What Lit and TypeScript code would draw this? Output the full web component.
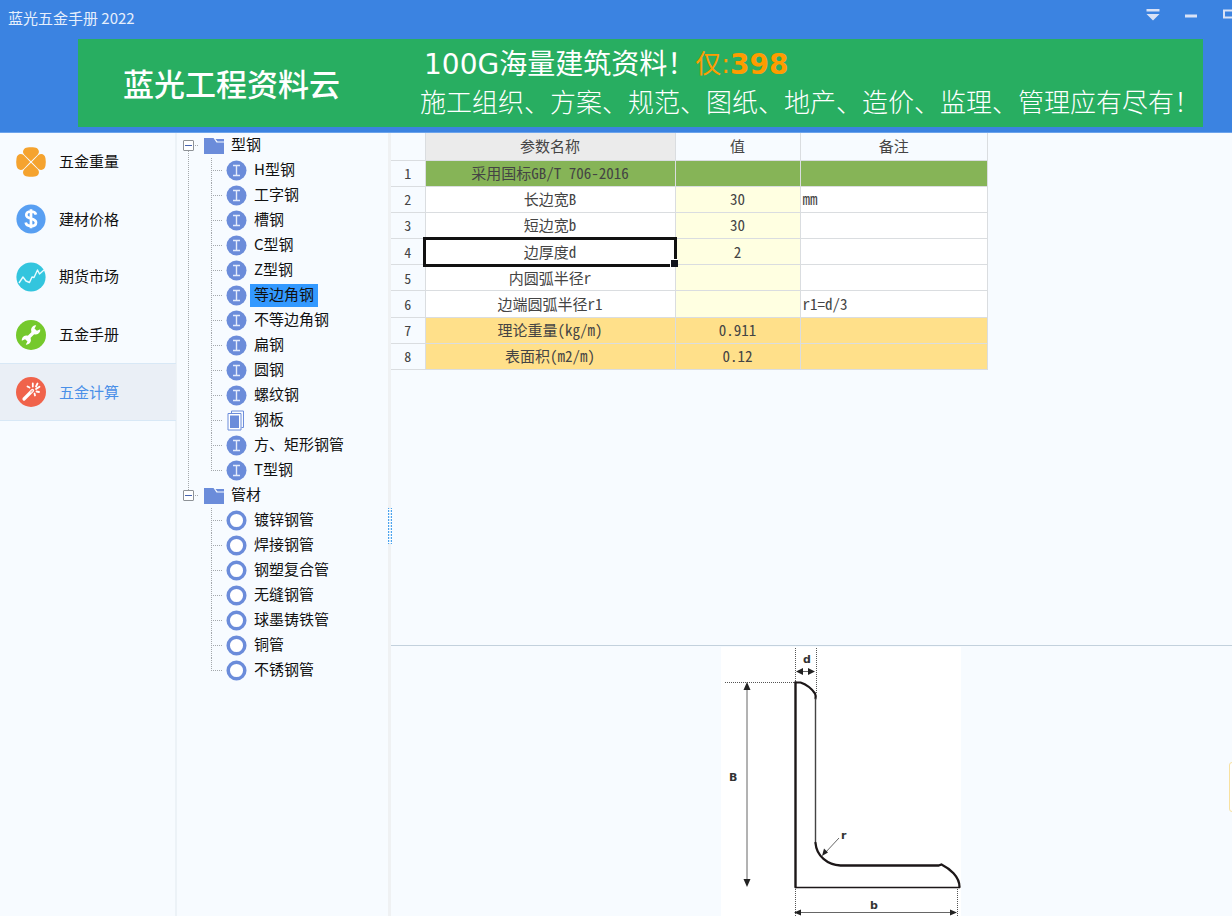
import { LitElement, html, css, svg, nothing } from "lit";
import { customElement, state } from "lit/decorators.js";
import { classMap } from "lit/directives/class-map.js";

type Kind = "beam" | "plate" | "pipe";

interface Group {
  name: string;
  items: { name: string; kind: Kind }[];
}

const beam = (name: string) => ({ name, kind: "beam" as Kind });
const pipe = (name: string) => ({ name, kind: "pipe" as Kind });

const GROUPS: Group[] = [
  {
    name: "型钢",
    items: [
      beam("H型钢"),
      beam("工字钢"),
      beam("槽钢"),
      beam("C型钢"),
      beam("Z型钢"),
      beam("等边角钢"),
      beam("不等边角钢"),
      beam("扁钢"),
      beam("圆钢"),
      beam("螺纹钢"),
      { name: "钢板", kind: "plate" },
      beam("方、矩形钢管"),
      beam("T型钢"),
    ],
  },
  {
    name: "管材",
    items: ["镀锌钢管", "焊接钢管", "钢塑复合管", "无缝钢管", "球墨铸铁管", "铜管", "不锈钢管"].map(pipe),
  },
];

const ROWS = [
  { name: "采用国标GB/T 706-2016", value: "", note: "", tone: "standard" },
  { name: "长边宽B", value: "30", note: "mm", tone: "input" },
  { name: "短边宽b", value: "30", note: "", tone: "input" },
  { name: "边厚度d", value: "2", note: "", tone: "input" },
  { name: "内圆弧半径r", value: "", note: "", tone: "input" },
  { name: "边端圆弧半径r1", value: "", note: "r1=d/3", tone: "input" },
  { name: "理论重量(kg/m)", value: "0.911", note: "", tone: "result" },
  { name: "表面积(m2/m)", value: "0.12", note: "", tone: "result" },
];

const petal = "M15 14.2 8.3 7.8C5.6 4.7 7.6.9 11.4.5c2.4-.4 4.8-.4 7.2 0 3.8.4 5.8 4.2 3.1 7.3Z";

const MENU = [
  {
    name: "五金重量",
    icon: svg`<g fill="#f5a32f">${[0, 90, 180, 270].map(
      (a) => svg`<path d=${petal} transform="rotate(${a} 15 15)"/>`
    )}</g>`,
  },
  {
    name: "建材价格",
    icon: svg`<circle cx="15" cy="15" r="14.6" fill="#589ff2"/>
      <path d="M20 10.6c-.5-2-2.300-3.100-5-3.100-2.900 0-4.700 1.300-4.700 3.400 0 4.700 9.700 2.700 9.700 7.600 0 2.200-1.900 3.600-5 3.600-3 0-4.900-1.300-5.300-3.500M15 5.300v19" fill="none" stroke="#fff" stroke-width="2.700"/>`,
  },
  {
    name: "期货市场",
    icon: svg`<circle cx="15" cy="15" r="14.600" fill="#33c5de"/>
      <path d="M3 21 7 15l3 4 3.500 1.500L16 15l2 .5L21.500 8l2 4L28 8" fill="none" stroke="#e8fbff" stroke-width="1.400" stroke-linejoin="round"/>`,
  },
  {
    name: "五金手册",
    icon: svg`<circle cx="15" cy="15" r="15" fill="#75c92c"/>
      <path d="m10.500 19.500 9-9" stroke="#fff" stroke-width="3.400"/>
      <path d="M24.200 9.200a4.600 4.600 0 1 1-4-3.800l-1.700 3 2.400 2.300Z" fill="#fff"/>
      <path d="M5.800 20.800a4.600 4.600 0 1 1 4 3.800l1.700-3-2.400-2.300Z" fill="#fff"/>`,
  },
  {
    name: "五金计算",
    icon: svg`<circle cx="15" cy="15" r="15" fill="#f0634b"/>
      <path d="m8 22 8.500-8.500" stroke="#fff" stroke-width="3.200" stroke-linecap="round"/>
      <path d="m14.500 15.500 2.300-2.300" stroke="#f7b3a6" stroke-width="1.400"/>
      <path d="M16.800 6.500v3M11.500 9.500l2 1M21.500 6.500l-1.500 3M20 12l3.500-2.300M20.500 14.500l2.500.5M18.500 16.500l.5 2" stroke="#fff" stroke-width="1.800" stroke-linecap="round"/>`,
  },
];

@customElement("app-root")
export class AppRoot extends LitElement {
  @state() private section = "五金计算";
  @state() private profile = "等边角钢";
  @state() private activeRow = 3;
  @state() private collapsed: string[] = [];

  static styles = css`
    :host {
      display: flex;
      flex-direction: column;
      position: relative;
      height: 100vh;
      overflow: hidden;
      background: #f7fbff;
      color: #111;
      font: 15px/25px "Noto Sans CJK SC", "Liberation Sans", sans-serif;
    }
    * {
      box-sizing: border-box;
    }
    button {
      font: inherit;
      color: inherit;
      background: none;
      border: 0;
      padding: 0;
      margin: 0;
      text-align: left;
      white-space: nowrap;
    }
    ul {
      list-style: none;
      margin: 0;
      padding: 0;
    }
    svg {
      display: block;
      flex: none;
    }

    .header {
      flex: none;
      background: #3b83e1;
      border-bottom: 1px solid #6ba3ec;
      color: #fff;
      overflow: hidden;
    }
    .titlebar {
      display: flex;
      justify-content: space-between;
      height: 39px;
      padding-left: 8px;
      margin-right: -16px;
    }
    .title {
      margin: 0;
      padding-top: 5px;
      font-size: 15px;
      font-weight: 400;
      color: #e6effc;
    }
    .controls {
      display: flex;
      height: 30px;
    }
    .control {
      width: 38px;
      display: grid;
      place-items: center;
    }

    .banner {
      display: flex;
      height: 88px;
      margin: 0 29px 5px 78px;
      padding-left: 45px;
      gap: 80px;
      background: #28ae61;
      color: #fff;
      text-decoration: none;
      white-space: nowrap;
      overflow: hidden;
    }
    .brand {
      font-size: 31px;
      line-height: 88px;
      font-weight: 500;
    }
    .pitch {
      padding-top: 6px;
    }
    .offer {
      display: flex;
      align-items: center;
      height: 38px;
      font-family: "DejaVu Sans", "Noto Sans CJK SC", sans-serif;
      font-size: 28px;
      padding-left: 4px;
    }
    .price {
      display: flex;
      align-items: center;
      color: #ff9c00;
      font-size: 26px;
    }
    .amount {
      font-weight: 700;
      font-size: 28px;
    }
    .topics {
      font-size: 26px;
      line-height: 36px;
      font-weight: 300;
    }

    .body {
      flex: 1;
      min-height: 0;
      display: flex;
    }
    .menu {
      flex: none;
      width: 177px;
      border-right: 2px solid #ecf2f7;
    }
    .menu-list {
      display: grid;
      grid-auto-rows: 1fr;
      height: 288px;
    }
    .menu-item {
      display: flex;
      align-items: center;
      gap: 13px;
      width: 176px;
      height: 100%;
      padding-left: 16px;
      border: solid transparent;
      border-width: 1px 0;
    }
    .menu-name {
      padding-bottom: 2px;
    }
    .menu-item.current {
      color: #4a90e8;
      background: #eaeff6;
      border-color: #d8e8f6;
    }

    .tree {
      flex: none;
      width: 211px;
      overflow: hidden;
    }
    .group {
      --dots: repeating-linear-gradient(#a4a8ac 0 1px, transparent 1px 2px);
      background: var(--dots) 11px 0 / 1px 12px no-repeat;
    }
    .group:first-child {
      background-position: 11px 12px;
      background-size: 1px 100%;
    }
    .group-row {
      display: flex;
      align-items: center;
      height: 25px;
      padding-left: 6px;
    }
    .toggle {
      flex: none;
      width: 11px;
      height: 11px;
      border: 1px solid #8e9297;
      border-radius: 1px;
      background: #fff;
      display: grid;
      place-items: center;
    }
    .stub {
      width: 5px;
      height: 1px;
      margin-right: 5px;
      background: repeating-linear-gradient(90deg, transparent 0 1px, #a4a8ac 1px 2px);
    }
    .group-name {
      padding: 0 0 3px 7px;
      line-height: 20px;
    }
    .leaf {
      display: flex;
      align-items: center;
      height: 25px;
      padding-left: 34px;
    }
    .guide {
      flex: none;
      width: 11px;
      height: 25px;
      margin-right: 4px;
      background:
        repeating-linear-gradient(#a4a8ac 0 1px, transparent 1px 2px) 0 0 / 1px 100% no-repeat,
        repeating-linear-gradient(90deg, #a4a8ac 0 1px, transparent 1px 2px) 0 12px / 100% 1px no-repeat;
    }
    .leaf:last-child .guide {
      background-size: 1px 12px, 100% 1px;
    }
    .leaf-name {
      margin-left: 3px;
      padding: 0 4px 3px;
      line-height: 20px;
    }
    .leaf-name.current {
      background: #3399ff;
    }

    .splitter {
      flex: none;
      width: 3px;
      background: #eff1f3;
      display: flex;
      justify-content: center;
    }
    .grip {
      flex: none;
      width: 4px;
      height: 36px;
      margin-top: 375px;
      background: repeating-linear-gradient(transparent 0 1px, #fff 1px 2px, transparent 2px 3px),
        repeating-linear-gradient(90deg, #4ba3ee 0 1px, #d5e9fa 1px 3px);
    }

    .work {
      flex: 1;
      min-width: 0;
      display: grid;
      grid-template-rows: minmax(0, 1fr) 271px;
    }
    .sheet {
      table-layout: fixed;
      border-collapse: collapse;
      width: 597px;
      height: 237px;
      font-family: "Noto Sans Mono CJK SC", "Noto Sans CJK SC", monospace;
      color: #444;
      font-weight: 400;
      line-height: 22px;
    }
    .sheet th {
      font-weight: 400;
    }
    .sheet th,
    .sheet td {
      height: 26px;
      padding: 0 2px;
      border: 1px solid #dadde0;
      text-align: center;
      background: #fff;
      white-space: nowrap;
    }
    .sheet th {
      background: #f7fbff;
    }
    .sheet thead th {
      height: 27px;
      border-top: 0;
    }
    .sheet th:first-child {
      border-left: 0;
    }
    .col-index {
      width: 34px;
    }
    .col-name {
      width: 250px;
    }
    .col-value {
      width: 125px;
    }
    .sheet .index {
      font-size: 14px;
    }
    .sheet .focus-col {
      background: #ebebeb;
    }
    .sheet .note {
      text-align: left;
    }
    .sheet .input .value {
      background: #ffffe1;
    }
    .sheet .standard td {
      background: #86b457;
    }
    .sheet .result td {
      background: #ffe08a;
    }
    .sheet .active {
      position: relative;
      outline: 3px solid #111;
      outline-offset: -1px;
    }
    .active::after {
      content: "";
      position: absolute;
      right: -3px;
      bottom: -3px;
      width: 7px;
      height: 7px;
      background: #11131c;
      border: solid #fff;
      border-width: 1px 0 0 1px;
    }

    .figure {
      display: flex;
      justify-content: center;
      margin: 0;
      padding: 1px 0 0 59px;
      border-top: 1px solid #c3d1dd;
      overflow: hidden;
    }
    .label {
      font: bold 11px "DejaVu Sans", sans-serif;
      fill: #333;
    }

    .drawer {
      position: absolute;
      right: -10px;
      bottom: 104px;
      width: 13px;
      height: 50px;
      background: #fff;
      border: 1px solid #f8e1a0;
      border-radius: 3px;
    }
  `;

  private toggle(name: string) {
    this.collapsed = this.collapsed.includes(name)
      ? this.collapsed.filter((n) => n !== name)
      : [...this.collapsed, name];
  }

  private kindIcon(kind: Kind) {
    const shape = {
      beam: svg`<circle cx="10.500" cy="10.500" r="10" fill="#6b8cda"/>
        <path d="M7 5.500h7M7 15.500h7M10.500 5.500v10" stroke="#e4ebfb" stroke-width="1.400" fill="none"/>`,
      plate: svg`<path d="M5.500 3.500v-2.500h12v16.500h-2" fill="none" stroke="#6b8cda"/>
        <path d="M2 3.500h13v16.500H2Z" fill="#fff" stroke="#6b8cda"/>
        <path d="M4 5.500h9v12.500H4Z" fill="#6b8cda"/>`,
      pipe: svg`<circle cx="10.500" cy="10.500" r="8.300" fill="#fff" stroke="#6b8cda" stroke-width="3.500"/>`,
    }[kind];
    return html`<svg width="21" height="21" viewBox="0 0 21 21" aria-hidden="true">${shape}</svg>`;
  }

  private renderHeader() {
    return html`
      <header class="header">
        <div class="titlebar">
          <h1 class="title">蓝光五金手册 2022</h1>
          <div class="controls">
            <button class="control" aria-label="菜单">
              <svg width="14" height="12" viewBox="0 0 14 12" fill="#d9e2f6"><path d="M.5 0h13v2.500H.5ZM.5 5h13L7 11.500Z" /></svg>
            </button>
            <button class="control" aria-label="最小化">
              <svg width="12" height="8" viewBox="0 0 12 8" fill="#d9e2f6"><path d="M0 3.500h12v3H0Z" /></svg>
            </button>
            <button class="control" aria-label="最大化">
              <svg width="13" height="12" viewBox="0 0 13 12"><path d="M1 1.500h11v7H1Z" fill="none" stroke="#d9e2f6" stroke-width="2" /></svg>
            </button>
          </div>
        </div>
        <a class="banner" href="#cloud">
          <span class="brand">蓝光工程资料云</span>
          <div class="pitch">
            <div class="offer">
              <span>100G海量建筑资料！</span>
              <span class="price">仅:<b class="amount">398</b></span>
            </div>
            <div class="topics">施工组织、方案、规范、图纸、地产、造价、监理、管理应有尽有！</div>
          </div>
        </a>
      </header>
    `;
  }

  private renderMenu() {
    return html`
      <nav class="menu">
        <ul class="menu-list">
          ${MENU.map(
            (m) => html`<li>
              <button
                class=${classMap({ "menu-item": true, current: m.name === this.section })}
                @click=${() => (this.section = m.name)}
              >
                <svg width="30" height="30" viewBox="0 0 30 30" aria-hidden="true">${m.icon}</svg>
                <span class="menu-name">${m.name}</span>
              </button>
            </li>`
          )}
        </ul>
      </nav>
    `;
  }

  private renderTree() {
    return html`
      <ul class="tree">
        ${GROUPS.map(
          (g) => html`<li class="group">
            <div class="group-row">
              <button class="toggle" aria-label="展开或折叠${g.name}" @click=${() => this.toggle(g.name)}>
                <svg width="7" height="7" viewBox="0 0 7 7"><path d="M0 3.500h7" stroke="#4764b0" /></svg>
              </button>
              <span class="stub"></span>
              <svg width="20" height="18" viewBox="0 0 20 18" aria-hidden="true">
                <path d="M0 1h9.500l3 4.500H20V17H0Z" fill="#6b8cda" />
                <path d="M11.500 2H20v2.500h-6.500Z" fill="#6b8cda" />
              </svg>
              <button class="group-name" @click=${() => this.toggle(g.name)}>${g.name}</button>
            </div>
            ${this.collapsed.includes(g.name)
              ? nothing
              : html`<ul>
                  ${g.items.map(
                    (it) => html`<li class="leaf">
                      <span class="guide"></span>
                      ${this.kindIcon(it.kind)}
                      <button
                        class=${classMap({ "leaf-name": true, current: it.name === this.profile })}
                        @click=${() => (this.profile = it.name)}
                      >${it.name}</button>
                    </li>`
                  )}
                </ul>`}
          </li>`
        )}
      </ul>
    `;
  }

  private renderSheet() {
    return html`
      <div>
        <table class="sheet">
          <colgroup>
            <col class="col-index" />
            <col class="col-name" />
            <col class="col-value" />
            <col />
          </colgroup>
          <thead>
            <tr>
              <th></th>
              <th class="focus-col">参数名称</th>
              <th>值</th>
              <th>备注</th>
            </tr>
          </thead>
          <tbody>
            ${ROWS.map(
              (r, i) => html`<tr class=${r.tone}>
                <th class="index" scope="row">${i + 1}</th>
                <td class=${classMap({ active: i === this.activeRow })} @click=${() => (this.activeRow = i)}>${r.name}</td>
                <td class="value">${r.value}</td>
                <td class="note">${r.note}</td>
              </tr>`
            )}
          </tbody>
        </table>
      </div>
    `;
  }

  private renderFigure() {
    return html`
      <figure class="figure">
        <svg width="240" height="269" viewBox="0 0 240 269" role="img" aria-label="等边角钢截面">
          <path d="M0 0h240v269H0Z" fill="#fff" />
          <g fill="none" stroke="#555" stroke-dasharray="1 1">
            <path d="M74.500 1v33M95.500 1v46M4 35.500h70M74.500 242v27M236.500 242v27" />
          </g>
          <g fill="none" stroke="#666">
            <path d="M26 40v196M78 24.500h15M77 265.500h156M118 191l-14 15" />
          </g>
          <g fill="#222">
            <path d="m26 35-3.500 8h7ZM26 240l-3.500-8h7Z" />
            <path d="m75 24.500 7-3.500v7ZM94 24.500l-7-3.500v7Z" />
            <path d="m73 265.500 7-3v6ZM236 265.500l-7-3v6Z" />
            <path d="m101 209 2-7.500 4 4Z" />
          </g>
          <g fill="none" stroke="#1c1718" stroke-linecap="round">
            <path d="M74.500 240V35.500" stroke-width="2.400" />
            <path d="M74.500 35.500h5c6 2 11 6 14.500 11q1 2 .5 5" stroke-width="2.200" />
            <path d="M94.500 52v144" stroke="#444" stroke-width="1.400" />
            <path d="M94.500 196c1 13 12 22 25 22.500h98l3-1c8 4 18 12 18 22.500" stroke-width="2.300" />
            <path d="M74.500 240.500h164" stroke-width="1.400" />
          </g>
          <text class="label" x="82" y="16">d</text>
          <text class="label" x="8" y="134">B</text>
          <text class="label" x="120" y="192">r</text>
          <text class="label" x="149" y="262">b</text>
        </svg>
      </figure>
    `;
  }

  render() {
    return html`
      ${this.renderHeader()}
      <div class="body">
        ${this.renderMenu()} ${this.renderTree()}
        <div class="splitter"><span class="grip"></span></div>
        <main class="work">${this.renderSheet()} ${this.renderFigure()}</main>
      </div>
      <button class="drawer" aria-label="展开侧栏"></button>
    `;
  }
}
